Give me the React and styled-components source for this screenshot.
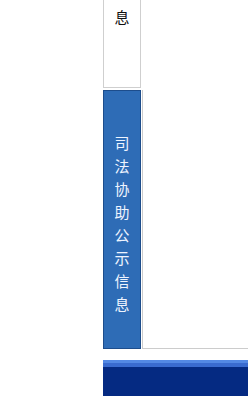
import React from "react";
import styled, { createGlobalStyle } from "styled-components";

const GlobalStyle = createGlobalStyle`
  html, body {
    margin: 0;
    padding: 0;
    background: #ffffff;
  }
  body {
    font-family: "Noto Sans CJK SC", "DejaVu Sans", sans-serif;
  }
`;

const Page = styled.div`
  display: flex;
  flex-direction: column;
  padding-left: 103px;
  width: 248px;
  box-sizing: border-box;
`;

const Main = styled.div`
  display: flex;
  align-items: flex-start;
`;

const Sidebar = styled.div`
  display: flex;
  flex-direction: column;
  gap: 2px;
  width: 38px;
  flex-shrink: 0;
`;

const Tab = styled.div`
  box-sizing: border-box;
  height: ${(props) => props.$height}px;
  padding-top: ${(props) => props.$padTop}px;
  background: ${(props) => (props.$active ? "#2e6cb6" : "#ffffff")};
  border: 1px solid ${(props) => (props.$active ? "#1d4d8c" : "#cfcfcf")};
  ${(props) => !props.$active && "border-top: none;"}
  color: ${(props) => (props.$active ? "#eef4ff" : "#111111")};
  font-size: 15px;
  line-height: 23px;
  text-align: center;
`;

const Char = styled.span`
  display: block;
`;

const Panel = styled.div`
  flex: 1;
  box-sizing: border-box;
  margin-top: 90px;
  margin-left: 1px;
  height: 259px;
  border-left: 1px solid #cccccc;
  border-bottom: 1px solid #cccccc;
`;

const Footer = styled.div`
  margin-top: 11px;
  height: 36px;
  background: linear-gradient(
    to bottom,
    #5489e4 0px,
    #5489e4 3px,
    #3a6bcf 3px,
    #3a6bcf 7px,
    #052a82 7px,
    #052a82 100%
  );
`;

const vertical = (text) =>
  text.split("").map((c, i) => <Char key={i}>{c}</Char>);

export default function App() {
  return (
    <>
      <GlobalStyle />
      <Page>
        <Main>
          <Sidebar>
            <Tab $height={88} $padTop={5}>
              {vertical("息")}
            </Tab>
            <Tab $active $height={259} $padTop={40}>
              {vertical("司法协助公示信息")}
            </Tab>
          </Sidebar>
          <Panel />
        </Main>
        <Footer />
      </Page>
    </>
  );
}
